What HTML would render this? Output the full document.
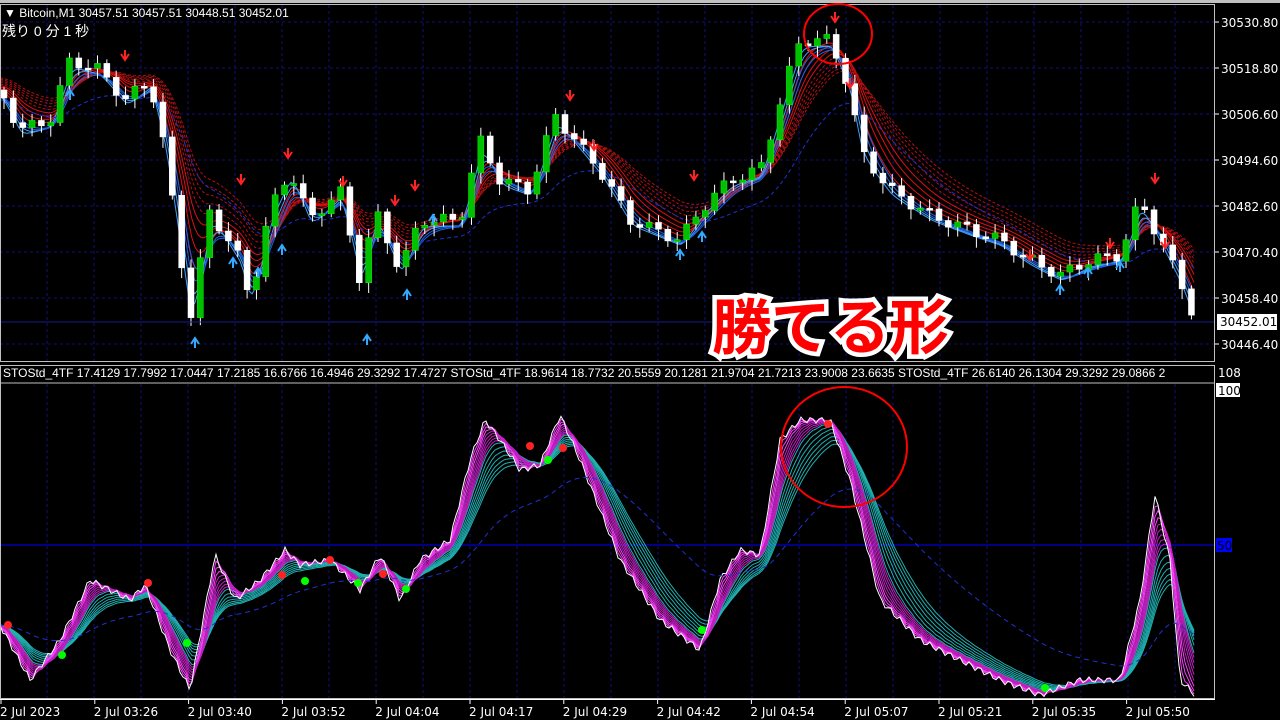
<!DOCTYPE html>
<html><head><meta charset="utf-8">
<style>
html,body{margin:0;padding:0;background:#000;overflow:hidden}
#wrap{position:relative;width:1280px;height:720px;background:#000;font-family:"Liberation Sans","Noto Sans CJK JP",sans-serif}
svg{position:absolute;left:0;top:0}
.t{fill:#fff;font-size:12px;font-family:"DejaVu Sans","Liberation Sans","Noto Sans CJK JP",sans-serif}
.h{fill:#fff;font-size:12px;font-family:"Liberation Sans","Noto Sans CJK JP",sans-serif}
.big{position:absolute;left:712px;top:290px;font-size:60px;font-weight:bold;color:#f00;-webkit-text-stroke:9px #fff;paint-order:stroke fill;font-family:"Noto Sans CJK JP",sans-serif;letter-spacing:-1px;line-height:68px}
</style></head><body><div id="wrap">
<svg id="s" width="1280" height="720" xmlns="http://www.w3.org/2000/svg">
<g id="grid"></g>
<g id="lines"></g>
<g id="candles"></g>
<line x1="0" y1="545" x2="1215" y2="545" stroke="#0000ff" stroke-width="1"/>
<line x1="0" y1="322" x2="1215" y2="322" stroke="#1a1a8a" stroke-width="1"/>
<g id="ind"></g>
<rect x="0.5" y="4.5" width="1214" height="357" fill="none" stroke="#c0c0c0"/>
<rect x="0.5" y="365.5" width="1214" height="333" fill="none" stroke="#c0c0c0"/>
<line x1="0" y1="383" x2="1215" y2="383" stroke="#c0c0c0"/>
<rect x="0" y="0" width="1280" height="3" fill="#c0c0c0"/>
<line x1="0" y1="699.5" x2="1215" y2="699.5" stroke="#fff"/>
<g id="ticks"></g>
<text class="h" x="4" y="17">▼ Bitcoin,M1  30457.51 30457.51 30448.51 30452.01</text>
<text class="h" x="2" y="36" style="font-size:14px">残り 0 分 1 秒</text>
<svg x="0" y="365" width="1215" height="18"><text class="h" x="3" y="12">STOStd_4TF 17.4129 17.7992 17.0447 17.2185 16.6766 16.4946 29.3292 17.4727  STOStd_4TF 18.9614 18.7732 20.5559 20.1281 21.9704 21.7213 23.9008 23.6635  STOStd_4TF 26.6140 26.1304 29.3292 29.0866 2</text></svg>
<g id="axis"></g>
<rect x="1217" y="314" width="60" height="16" fill="#fff"/>
<text x="1220" y="326" style="font-size:12px;fill:#000;font-family:'DejaVu Sans',sans-serif">30452.01</text>
<text class="t" x="1218" y="377">108</text>
<rect x="1216" y="383" width="24" height="14" fill="#fff"/>
<text x="1218" y="395" style="font-size:12px;fill:#000;font-family:'DejaVu Sans',sans-serif">100</text>
<rect x="1216" y="538" width="16" height="14" fill="#0000ff"/>
<text x="1217" y="550" style="font-size:12px;fill:#000;font-family:'DejaVu Sans',sans-serif">50</text>
<ellipse cx="838" cy="34" rx="34" ry="30" fill="none" stroke="#f00" stroke-width="2"/>
<ellipse cx="844" cy="447" rx="63" ry="60" fill="none" stroke="#f00" stroke-width="2"/>
</svg>
<div class="big">勝てる形</div>
</div>
<script>
(function(){
var NS="http://www.w3.org/2000/svg";
function el(p,t,a){var e=document.createElementNS(NS,t);for(var k in a)e.setAttribute(k,a[k]);document.getElementById(p).appendChild(e);return e;}
function interp(pts,x){for(var i=1;i<pts.length;i++){if(x<=pts[i][0]){var a=pts[i-1],b=pts[i];return a[1]+(b[1]-a[1])*(x-a[0])/(b[0]-a[0]);}}return pts[pts.length-1][1];}
for(var x=47;x<1215;x+=47){el("grid","line",{x1:x,y1:5,x2:x,y2:361,stroke:"#101078","stroke-dasharray":"3,3"});el("grid","line",{x1:x,y1:384,x2:x,y2:699,stroke:"#101078","stroke-dasharray":"3,3"});}
var py=[22,68,114,160,206,252,298,344],pl=["30530.80","30518.80","30506.60","30494.60","30482.60","30470.40","30458.40","30446.40"];
for(var i=0;i<8;i++){el("grid","line",{x1:0,y1:py[i],x2:1215,y2:py[i],stroke:"#101078","stroke-dasharray":"3,3"});var t=el("axis","text",{"class":"t",x:1221,y:py[i]+5});t.textContent=pl[i];el("axis","line",{x1:1215,y1:py[i],x2:1219,y2:py[i],stroke:"#fff"});}
var tl=["2 Jul 2023","2 Jul 03:26","2 Jul 03:40","2 Jul 03:52","2 Jul 04:04","2 Jul 04:17","2 Jul 04:29","2 Jul 04:42","2 Jul 04:54","2 Jul 05:07","2 Jul 05:21","2 Jul 05:35","2 Jul 05:50"];
for(var i=0;i<13;i++){var x=1+i*93.8;el("ticks","line",{x1:x,y1:699,x2:x,y2:704,stroke:"#fff"});var t=el("ticks","text",{"class":"t",x:i==0?0:x-1,y:716});t.textContent=tl[i];}
var P=[[0,90],[20,130],[50,120],[70,60],[100,70],[125,100],[150,80],[165,150],[190,320],[210,210],[240,260],[250,300],[270,210],[290,170],[310,220],[340,190],[360,280],[375,210],[400,270],[420,220],[460,220],[480,140],[500,180],[530,190],[555,115],[575,140],[600,170],[630,220],[680,240],[700,210],[730,180],[760,170],[790,70],[800,40],[830,40],[850,90],[860,150],[890,190],[930,215],[970,230],[1000,240],[1030,260],[1060,275],[1090,260],[1120,255],[1140,200],[1160,240],[1180,280],[1195,320]];
function ema(vals,n){var k=2/(n+1),o=[],v=vals[0];for(var i=0;i<vals.length;i++){v=v+(vals[i]-v)*k;o.push(v);}return o;}
var xs=[],vs=[];for(var x=0;x<=1196;x+=3){xs.push(x);vs.push(interp(P,x));}
function pth(arr,off){var d="";for(var i=0;i<arr.length;i++)d+=(i?"L":"M")+xs[i]+","+(arr[i]+(off||0)).toFixed(1);return d;}
for(var n=8;n<=32;n+=3){var e=ema(vs,n);el("lines","path",{d:pth(e,-(n-8)*0.5),fill:"none",stroke:n>18?"#b01010":"#e01010","stroke-width":1,"stroke-dasharray":n>18?"3,2":""});}
for(var n=3;n<=9;n+=2){var e=ema(vs,n);el("lines","path",{d:pth(e,6),fill:"none",stroke:n<6?"#40a0ff":"#2060e0","stroke-width":1});}
var e=ema(vs,40);el("lines","path",{d:pth(e,10),fill:"none",stroke:"#2030d0","stroke-dasharray":"4,3"});
var prev=interp(P,0);
for(var i=0;i<128;i++){var x=4+i*9.35;var c=interp(P,x)+Math.sin(i*1.7)*6;var o=prev;var tp=Math.min(o,c),bt=Math.max(o,c);if(bt-tp<2)bt=tp+2;
var up=c<o;el("candles","line",{x1:x,y1:tp-3-Math.abs(Math.sin(i*2.3))*6,x2:x,y2:bt+3+Math.abs(Math.cos(i*1.3))*8,stroke:"#fff"});
el("candles","rect",{x:x-3,y:tp,width:6,height:bt-tp,fill:up?"#00c000":"#fff",stroke:up?"#00ff00":"#fff","stroke-width":0.5});prev=c;}
var ra=[[125,60],[241,184],[288,158],[343,186],[395,205],[415,190],[570,100],[594,150],[694,180],[835,22],[850,88],[1030,260],[1110,248],[1155,183],[1165,248]];
ra.forEach(function(a){el("candles","path",{d:"M"+(a[0]-4)+","+(a[1]-6)+"L"+a[0]+","+a[1]+"L"+(a[0]+4)+","+(a[1]-6)+"M"+a[0]+","+(a[1]-10)+"V"+a[1],stroke:"#f22",fill:"none","stroke-width":2});});
var ba=[[70,90],[195,338],[233,258],[258,268],[282,245],[367,335],[407,290],[433,215],[680,250],[702,232],[1060,285],[1088,268],[1120,262]];
ba.forEach(function(a){el("candles","path",{d:"M"+(a[0]-4)+","+(a[1]+6)+"L"+a[0]+","+a[1]+"L"+(a[0]+4)+","+(a[1]+6)+"M"+a[0]+","+a[1]+"V"+(a[1]+10),stroke:"#3af",fill:"none","stroke-width":2});});
var W=[[0,625],[30,680],[60,640],[90,580],[130,600],[145,585],[170,650],[190,690],[215,555],[235,600],[260,580],[285,550],[300,565],[330,560],[360,590],[380,555],[400,600],[420,560],[450,540],[470,460],[485,420],[500,440],[520,470],[540,465],[560,415],[580,460],[620,560],[660,620],[700,650],[720,580],[740,550],[760,555],[780,440],[800,420],[830,420],[850,480],[880,600],[920,640],[960,660],[1000,680],[1040,695],[1080,680],[1120,680],[1140,600],[1155,495],[1170,560],[1180,680],[1195,695]];
var ws=[];for(var i=0;i<xs.length;i++)ws.push(interp(W,xs[i])+Math.sin(i*1.9)*3);
for(var n=10;n<=22;n+=2){var e=ema(ws,n);el("ind","path",{d:pth(e),fill:"none",stroke:"#20b0b0","stroke-width":1});}
for(var n=2;n<=9;n+=1){var e=ema(ws,n);el("ind","path",{d:pth(e),fill:"none",stroke:n<5?"#ff40ff":"#c020c0","stroke-width":1});}
el("ind","path",{d:pth(ws),fill:"none",stroke:"#fff","stroke-width":1});
var e=ema(ws,60);el("ind","path",{d:pth(e),fill:"none",stroke:"#2030d0","stroke-dasharray":"5,4"});
[[8,625],[148,583],[282,575],[330,560],[383,574],[530,446],[563,448],[828,424]].forEach(function(p){el("ind","circle",{cx:p[0],cy:p[1],r:4,fill:"#f22"});});
[[62,655],[187,643],[305,581],[358,583],[406,589],[548,460],[702,630],[1045,688]].forEach(function(p){el("ind","circle",{cx:p[0],cy:p[1],r:4,fill:"#0f0"});});
})();
</script>
</body></html>
